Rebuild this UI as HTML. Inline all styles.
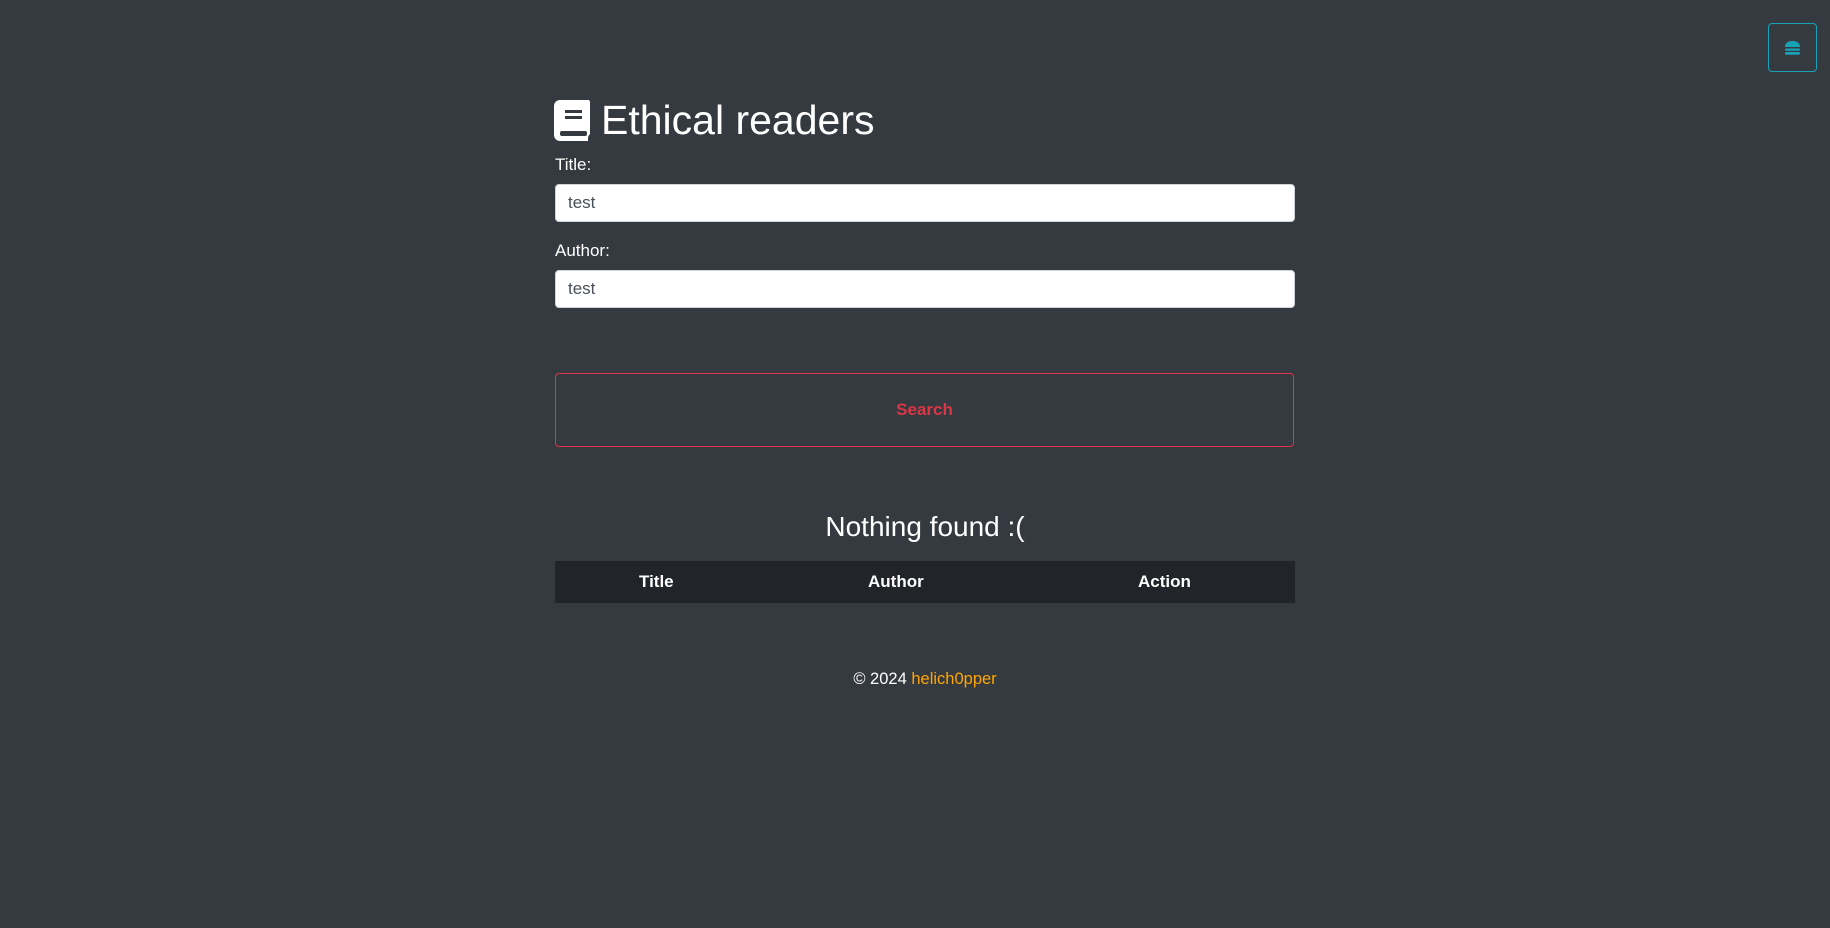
<!DOCTYPE html>
<html><head><meta charset="utf-8"><style>
html,body{margin:0;padding:0;background:#343a40;width:1830px;height:928px;overflow:hidden;font-family:"Liberation Sans",sans-serif;color:#fff}
.abs{position:absolute}
.lbl{font-size:17px;left:555px}
.inp{left:555px;width:738px;height:36px;background:#fff;border:1px solid #ced4da;border-radius:4px;color:#495057;font-size:17px;line-height:36px;box-sizing:content-box;text-indent:12px}
</style></head><body>
<div class="abs" style="left:1768px;top:23px;width:47px;height:47px;border:1px solid #17a2b8;border-radius:4px">
<svg class="abs" style="left:15px;top:17px" width="17" height="14" viewBox="0 0 17 14"><path d="M1 6C1 2 4 0 8.5 0S16 2 16 6Z" fill="#17a2b8"/><rect x="1" y="7.5" width="15" height="2.3" rx="1" fill="#17a2b8"/><rect x="1" y="11" width="15" height="2.8" rx="1.2" fill="#17a2b8"/></svg>
</div>
<svg class="abs" style="left:554px;top:100px" width="36" height="41" viewBox="0 0 36 41"><path d="M6 0H34A2 2 0 0 1 36 2V34Q34 36 34 38V41H6A6 6 0 0 1 0 35V6A6 6 0 0 1 6 0Z" fill="#fff"/><rect x="11" y="10" width="17" height="3" fill="#343a40"/><rect x="11" y="16" width="17" height="3" fill="#343a40"/><rect x="6" y="31" width="27" height="5" rx="2" fill="#343a40"/></svg>
<div class="abs" style="left:601px;top:95px;font-size:41px;line-height:50px">Ethical readers</div>
<div class="abs lbl" style="top:155px">Title:</div>
<div class="abs inp" style="top:184px">test</div>
<div class="abs lbl" style="top:241px">Author:</div>
<div class="abs inp" style="top:270px">test</div>
<div class="abs" style="left:555px;top:373px;width:737px;height:72px;border:1px solid #dc3545;border-radius:4px;color:#dc3545;font-weight:bold;font-size:17px;text-align:center;line-height:72px">Search</div>
<div class="abs" style="left:555px;width:740px;top:509px;text-align:center;font-size:28px;line-height:36px">Nothing found :(</div>
<div class="abs" style="left:555px;top:561px;width:740px;height:42px;background:#212529;font-weight:bold;font-size:17px;line-height:42px">
<span class="abs" style="left:101px;width:0;white-space:nowrap"><span style="position:relative;left:-17px">Title</span></span>
<span class="abs" style="left:313px">Author</span>
<span class="abs" style="left:583px">Action</span>
</div>
<div class="abs" style="left:555px;width:740px;top:668px;text-align:center;font-size:16.5px;line-height:22px">© 2024 <span style="color:#ffa500">helich0pper</span></div>
</body></html>
